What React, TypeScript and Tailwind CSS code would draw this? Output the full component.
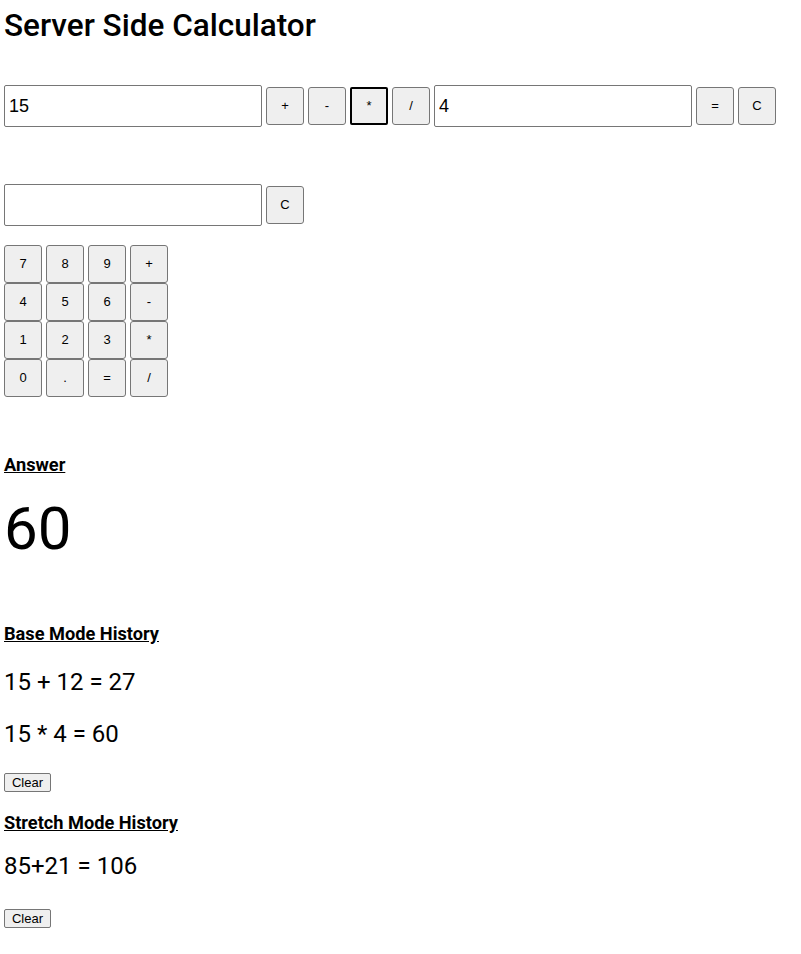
import React from "react";

const btn =
  "flex h-[38px] w-[38px] items-center justify-center rounded-[3px] border border-[#767676] bg-[#efefef] text-[13px] text-black font-['Liberation_Sans',Arial,sans-serif]";

const input =
  "h-[42px] w-[258px] rounded-[2px] border border-[#767676] bg-white px-1 text-[18px] text-black font-['Liberation_Sans',Arial,sans-serif] outline-none";

const smallBtn =
  "flex h-[19px] w-[47px] items-center justify-center rounded-[2px] border border-[#767676] bg-[#efefef] text-[13px] text-black font-['Liberation_Sans',Arial,sans-serif]";

const keypad = ["7", "8", "9", "+", "4", "5", "6", "-", "1", "2", "3", "*", "0", ".", "=", "/"];

export default function App() {
  return (
    <div className="min-h-[954px] bg-white px-1 text-black font-['Roboto',sans-serif]">
      <h1 className="pt-[7px] text-[31.5px] font-medium leading-[38px]">Server Side Calculator</h1>

      {/* Base mode */}
      <div className="mt-[40px] flex items-center gap-1">
        <input className={input} defaultValue="15" readOnly />
        <button className={btn}>+</button>
        <button className={btn}>-</button>
        <button className="flex h-[38px] w-[38px] items-center justify-center rounded-[2px] border-2 border-black bg-[#efefef] text-[13px] text-black font-['Liberation_Sans',Arial,sans-serif]">
          *
        </button>
        <button className={btn}>/</button>
        <input className={input} defaultValue="4" readOnly />
        <button className={btn}>=</button>
        <button className={btn}>C</button>
      </div>

      {/* Stretch mode */}
      <div className="mt-[57px] flex items-center gap-1">
        <input className={input} defaultValue="" readOnly />
        <button className={btn}>C</button>
      </div>

      <div className="mt-[19px] grid w-[164px] grid-cols-4 gap-x-1">
        {keypad.map((k) => (
          <button key={k} className={btn}>
            {k}
          </button>
        ))}
      </div>

      <h4 className="mt-[56px] text-[18.2px] font-bold leading-[24px] underline">Answer</h4>
      <p className="mt-[20px] text-[60px] leading-[64px]">60</p>

      <h4 className="mt-[61px] text-[18.2px] font-bold leading-[24px] underline">Base Mode History</h4>
      <p className="mt-[20px] text-[24px] leading-[32px]">15 + 12 = 27</p>
      <p className="mt-[20px] text-[24px] leading-[32px]">15 * 4 = 60</p>
      <button className={`mt-[23px] ${smallBtn}`}>Clear</button>

      <h4 className="mt-[19px] text-[18.2px] font-bold leading-[24px] underline">Stretch Mode History</h4>
      <p className="mt-[15px] text-[24px] leading-[32px]">85+21 = 106</p>
      <button className={`mt-[27px] ${smallBtn}`}>Clear</button>
    </div>
  );
}
